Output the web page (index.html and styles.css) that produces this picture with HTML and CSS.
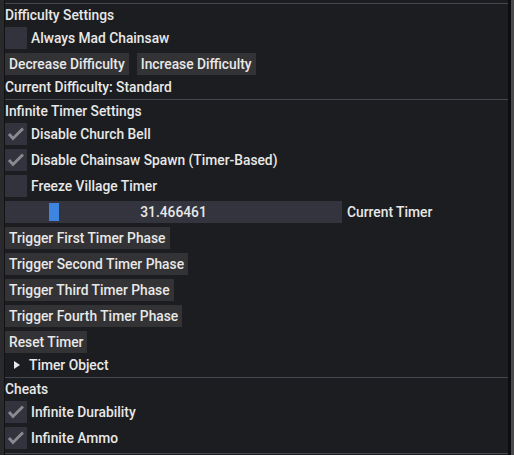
FILE: index.html
```html
<!DOCTYPE html>
<html>
<head>
<meta charset="utf-8">
<link rel="stylesheet" href="styles.css">
</head>
<body>
<div class="window">
  <div class="content">
    <div class="sep"></div>
    <div class="text">Difficulty Settings</div>
    <div class="check"><span class="box"></span><span class="label">Always Mad Chainsaw</span></div>
    <div class="row">
      <button class="btn">Decrease Difficulty</button>
      <button class="btn">Increase Difficulty</button>
    </div>
    <div class="text">Current Difficulty: Standard</div>
    <div class="sep"></div>
    <div class="text">Infinite Timer Settings</div>
    <div class="check"><span class="box on"><svg viewBox="0 0 22 22" class="tick"><polyline points="4,11 8,15.5 18,5.5"/></svg></span><span class="label">Disable Church Bell</span></div>
    <div class="check"><span class="box on"><svg viewBox="0 0 22 22" class="tick"><polyline points="4,11 8,15.5 18,5.5"/></svg></span><span class="label">Disable Chainsaw Spawn (Timer-Based)</span></div>
    <div class="check"><span class="box"></span><span class="label">Freeze Village Timer</span></div>
    <div class="row slider-row">
      <div class="slider"><span class="grab" style="left:44px"></span><span class="value">31.466461</span></div>
      <span class="label">Current Timer</span>
    </div>
    <div class="row"><button class="btn">Trigger First Timer Phase</button></div>
    <div class="row"><button class="btn">Trigger Second Timer Phase</button></div>
    <div class="row"><button class="btn">Trigger Third Timer Phase</button></div>
    <div class="row"><button class="btn">Trigger Fourth Timer Phase</button></div>
    <div class="row"><button class="btn">Reset Timer</button></div>
    <div class="tree"><span class="arrow"></span><span class="label">Timer Object</span></div>
    <div class="sep"></div>
    <div class="text">Cheats</div>
    <div class="check"><span class="box on"><svg viewBox="0 0 22 22" class="tick"><polyline points="4,11 8,15.5 18,5.5"/></svg></span><span class="label">Infinite Durability</span></div>
    <div class="check"><span class="box on"><svg viewBox="0 0 22 22" class="tick"><polyline points="4,11 8,15.5 18,5.5"/></svg></span><span class="label">Infinite Ammo</span></div>
    <div class="sep"></div>
  </div>
  <div class="scrollbar"><span class="gutter"></span><span class="thumb"></span></div>
</div>
</body>
</html>
```

FILE: styles.css
```css
html, body {
  margin: 0;
  padding: 0;
  background: #1c1d20;
  overflow: hidden;
}
.window {
  display: flex;
  width: 514px;
  height: 455px;
  overflow: hidden;
  background: #1c1d20;
  border-left: 4px solid #2a2a2c;
  box-sizing: border-box;
  font-family: Roboto, "Noto Sans", sans-serif;
  font-size: 13.8px;
  font-weight: 500;
  color: #e8e8e8;
}
.content {
  flex: 1;
  display: flex;
  flex-direction: column;
  gap: 4px;
  padding-top: 3px;
  border-left: 1px solid #121214;
  min-width: 0;
}
.sep {
  height: 1px;
  background: #46464e;
  margin-bottom: -1px;
  flex: none;
}
.text, .label {
  line-height: 16px;
  height: 16px;
  white-space: nowrap;
}
.check {
  display: flex;
  align-items: center;
  gap: 4px;
  height: 22px;
}
.box {
  width: 22px;
  height: 22px;
  background: #32333d;
  flex: none;
  display: block;
}
.tick {
  width: 22px;
  height: 22px;
  display: block;
}
.tick polyline {
  fill: none;
  stroke: #8a8a90;
  stroke-width: 2.8;
  stroke-linecap: butt;
  stroke-linejoin: miter;
}
.row {
  display: flex;
  gap: 8px;
  height: 22px;
  align-items: center;
}
.btn {
  font: inherit;
  color: inherit;
  background: #333336;
  border: none;
  margin: 0;
  padding: 3px 4px;
  height: 22px;
  line-height: 16px;
  white-space: nowrap;
}
.slider-row {
  gap: 5px;
}
.slider {
  position: relative;
  width: 337px;
  height: 22px;
  background: #33343e;
  display: flex;
  align-items: center;
  justify-content: center;
  flex: none;
}
.grab {
  position: absolute;
  top: 2px;
  width: 10px;
  height: 18px;
  background: #3d85e0;
}
.value {
  position: relative;
  line-height: 16px;
}
.tree {
  display: flex;
  align-items: center;
  height: 16px;
}
.arrow {
  width: 0;
  height: 0;
  margin-left: 9px;
  margin-right: 9px;
  border-top: 4px solid transparent;
  border-bottom: 4px solid transparent;
  border-left: 6px solid #e8e8e8;
}
.scrollbar {
  display: flex;
  flex: none;
  width: 6px;
}
.gutter {
  width: 3px;
  background: #0e0e10;
}
.thumb {
  width: 3px;
  background: #4a4a4c;
}
```
